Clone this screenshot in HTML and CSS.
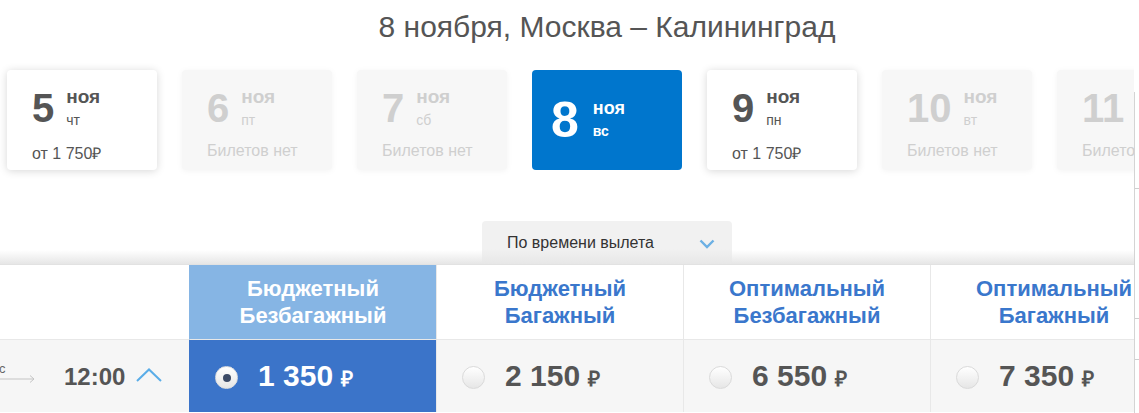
FILE: index.html
```html
<!DOCTYPE html>
<html lang="ru">
<head>
  <meta charset="UTF-8">
  <meta name="viewport" content="width=device-width, initial-scale=1.0">
  <title>Москва – Калининград</title>
  <link rel="stylesheet" href="styles.css">
</head>
<body>
  <div class="page">
    <div class="main">
      <div class="wrap">
        <h1 class="title">8 ноября, Москва – Калининград</h1>

        <div class="days">
          <div class="day">
            <div class="day-top">
              <span class="day-num">5</span>
              <span class="day-meta"><b>ноя</b><span>чт</span></span>
            </div>
            <div class="day-price">от 1 750₽</div>
          </div>
          <div class="day off">
            <div class="day-top">
              <span class="day-num">6</span>
              <span class="day-meta"><b>ноя</b><span>пт</span></span>
            </div>
            <div class="day-price">Билетов нет</div>
          </div>
          <div class="day off">
            <div class="day-top">
              <span class="day-num">7</span>
              <span class="day-meta"><b>ноя</b><span>сб</span></span>
            </div>
            <div class="day-price">Билетов нет</div>
          </div>
          <div class="day active">
            <div class="day-top">
              <span class="day-num">8</span>
              <span class="day-meta"><b>ноя</b><span>вс</span></span>
            </div>
          </div>
          <div class="day">
            <div class="day-top">
              <span class="day-num">9</span>
              <span class="day-meta"><b>ноя</b><span>пн</span></span>
            </div>
            <div class="day-price">от 1 750₽</div>
          </div>
          <div class="day off">
            <div class="day-top">
              <span class="day-num">10</span>
              <span class="day-meta"><b>ноя</b><span>вт</span></span>
            </div>
            <div class="day-price">Билетов нет</div>
          </div>
          <div class="day off">
            <div class="day-top">
              <span class="day-num">11</span>
              <span class="day-meta"><b>ноя</b><span>ср</span></span>
            </div>
            <div class="day-price">Билетов нет</div>
          </div>
        </div>

        <div class="sort-bar">
          <div class="sort">
            <span>По времени вылета</span>
            <svg width="16" height="10" viewBox="0 0 16 10"><polyline points="1.5,1.5 8,8 14.5,1.5" fill="none" stroke="#6cb0e4" stroke-width="2.4"/></svg>
          </div>
        </div>

        <div class="fares">
          <div class="cell head"></div>
          <div class="cell head fare selected">Бюджетный<br>Безбагажный</div>
          <div class="cell head fare">Бюджетный<br>Багажный</div>
          <div class="cell head fare">Оптимальный<br>Безбагажный</div>
          <div class="cell head fare">Оптимальный<br>Багажный</div>

          <div class="cell row flight">
            <div class="leg">
              <span class="leg-text">с</span>
              <svg width="44" height="8" viewBox="0 0 44 8"><line x1="0" y1="4" x2="43" y2="4" stroke="#c4c4c4" stroke-width="1"/><polyline points="39,0.5 43,4 39,7.5" fill="none" stroke="#c4c4c4" stroke-width="1"/></svg>
            </div>
            <span class="time">12:00</span>
            <svg class="toggle" width="26" height="14" viewBox="0 0 26 14"><polyline points="1,13 13,1.5 25,13" fill="none" stroke="#5aade8" stroke-width="2"/></svg>
          </div>
          <div class="cell row fare selected">
            <span class="radio on"></span>
            <span class="price">1 350 <small>₽</small></span>
          </div>
          <div class="cell row fare">
            <span class="radio"></span>
            <span class="price">2 150 <small>₽</small></span>
          </div>
          <div class="cell row fare">
            <span class="radio"></span>
            <span class="price">6 550 <small>₽</small></span>
          </div>
          <div class="cell row fare">
            <span class="radio"></span>
            <span class="price">7 350 <small>₽</small></span>
          </div>
        </div>
      </div>
    </div>
    <div class="rail">
      <div class="tick t1"></div>
      <div class="tick t2"></div>
      <div class="tick t3"></div>
    </div>
  </div>
</body>
</html>
```

FILE: styles.css
```css
body {
  margin: 0;
  font-family: "Liberation Sans", Arial, sans-serif;
  color: #555;
  background: #fff;
}
.page {
  display: flex;
  height: 413px;
  overflow: hidden;
}
.main {
  width: 1134px;
  flex: none;
  overflow: hidden;
}
.wrap {
  width: 1214px;
}
.title {
  margin: 0;
  height: 56px;
  line-height: 54px;
  font-size: 30px;
  font-weight: normal;
  text-align: center;
  color: #555;
}

/* даты */
.days {
  display: flex;
  gap: 25px;
  padding: 14px 0 0 7px;
}
.day {
  width: 150px;
  height: 100px;
  flex: none;
  box-sizing: border-box;
  padding: 16px 0 0 25px;
  border-radius: 4px;
  background: #fff;
  box-shadow: 0 1px 8px rgba(0, 0, 0, 0.16);
}
.day-top {
  display: flex;
  align-items: flex-start;
  gap: 12px;
}
.day-num {
  font-size: 40px;
  font-weight: bold;
  line-height: 44px;
  color: #555;
}
.day-meta {
  display: flex;
  flex-direction: column;
  padding-top: 1px;
}
.day-meta b {
  font-size: 19px;
  line-height: 20px;
  color: #555;
}
.day-meta span {
  font-size: 14px;
  line-height: 26px;
  color: #555;
}
.day-price {
  margin-top: 9px;
  font-size: 16px;
  color: #555;
}
.day.off {
  background: #f7f7f7;
  box-shadow: 0 1px 6px rgba(0, 0, 0, 0.05);
}
.day.off .day-num,
.day.off .day-meta b,
.day.off .day-meta span,
.day.off .day-price {
  color: #cfcfcf;
}
.day.active {
  background: #0076cd;
  box-shadow: none;
  padding: 0 0 0 19px;
  display: flex;
  align-items: center;
}
.day.active .day-top {
  gap: 14px;
  align-items: center;
}
.day.active .day-num {
  font-size: 50px;
  line-height: 54px;
  color: #fff;
}
.day.active .day-meta {
  padding-top: 2px;
}
.day.active .day-meta b {
  color: #fff;
  font-size: 18px;
}
.day.active .day-meta span {
  color: #fff;
  font-weight: bold;
  font-size: 14px;
}

/* сортировка */
.sort-bar {
  display: flex;
  justify-content: center;
  margin-top: 51px;
  background: linear-gradient(to bottom, #fff 29px, #e6e6e6);
}
.sort {
  width: 250px;
  height: 43px;
  box-sizing: border-box;
  padding: 0 17px 0 25px;
  display: flex;
  align-items: center;
  justify-content: space-between;
  border-radius: 4px 4px 0 0;
  background: linear-gradient(to bottom, #f1f1f1 65%, #e7e7e7);
  font-size: 16px;
  color: #333;
}
.sort svg {
  margin-top: 3px;
}

/* тарифы */
.fares {
  display: grid;
  grid-template-columns: 189px repeat(4, 247px);
  border-top: 1px solid #e2e2e2;
}
.cell {
  box-sizing: border-box;
}
.head {
  height: 75px;
  display: flex;
  align-items: center;
  justify-content: center;
  text-align: center;
  font-size: 22px;
  line-height: 27px;
  font-weight: bold;
  color: #3a77cc;
  background: #fff;
  border-bottom: 1px solid #e8e8e8;
}
.fare {
  border-left: 1px solid #e8e8e8;
}
.head.selected {
  background: #86b5e4;
  border-left-color: #86b5e4;
  color: #fff;
}
.row {
  height: 72px;
  display: flex;
  align-items: center;
  background: #f6f6f6;
}
.row.fare {
  padding-left: 25px;
  gap: 20px;
}
.row.selected {
  background: #3b74c9;
  border-left-color: #3b74c9;
}
.radio {
  width: 23px;
  height: 23px;
  box-sizing: border-box;
  border-radius: 50%;
  border: 1px solid #dadada;
  background: linear-gradient(to bottom, #fff, #e6e6e6);
  position: relative;
  margin-top: 2px;
}
.radio.on {
  border-color: #e0e0e0;
}
.radio.on::after {
  content: "";
  position: absolute;
  left: 7px;
  top: 7px;
  width: 8px;
  height: 8px;
  border-radius: 50%;
  background: #3c4a66;
}
.price {
  font-size: 30px;
  font-weight: bold;
  color: #555;
}
.price small {
  font-size: 21px;
}
.row.selected .price {
  color: #fff;
}

.flight {
  padding-top: 2px;
}
.leg {
  margin-left: -9px;
  width: 44px;
  display: flex;
  flex-direction: column;
  margin-top: -8px;
}
.leg-text {
  font-size: 13px;
  line-height: 12px;
  padding-left: 8px;
  color: #666;
}
.time {
  margin-left: 29px;
  font-size: 24px;
  font-weight: bold;
  color: #555;
}
.toggle {
  margin-left: 11px;
  margin-top: -4px;
}

/* полоса справа */
.rail {
  flex: 1;
  margin-top: 92px;
  border-left: 1px solid #d4d4d4;
}
.tick {
  height: 1px;
  width: 4px;
  background: #cfcfcf;
}
.t1 { margin-top: 96px; }
.t2 { margin-top: 129px; }
.t3 { margin-top: 40px; }
```
